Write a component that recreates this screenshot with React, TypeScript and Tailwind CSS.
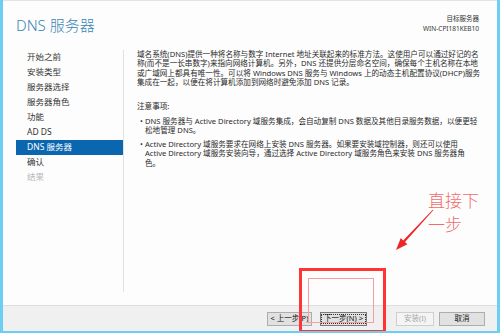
const navItems = [
  { label: "开始之前" },
  { label: "安装类型" },
  { label: "服务器选择" },
  { label: "服务器角色" },
  { label: "功能" },
  { label: "AD DS" },
  { label: "DNS 服务器", active: true },
  { label: "确认" },
  { label: "结果", disabled: true },
]

function Btn({ label, w, focus, disabled }: { label: string; w: string; focus?: boolean; disabled?: boolean }) {
  return (
    <div
      className={`${w} h-[14px] flex items-center justify-center border text-[7.5px] leading-none ${
        disabled
          ? "border-[#cfcfcf] bg-[#f4f4f4] text-[#a8a8a8]"
          : focus
            ? "border-[#7a7a7a] bg-[#e1e1e1] text-[#111]"
            : "border-[#adadad] bg-[#e1e1e1] text-[#111]"
      }`}
    >
      {focus ? (
        <span className="border border-dotted border-[#333] px-[2px] h-[10px] flex items-center whitespace-nowrap">{label}</span>
      ) : (
        label
      )}
    </div>
  )
}

export default function App() {
  return (
    <div className="relative w-[500px] h-[333px] overflow-hidden border-l-[3px] border-r-[3px] border-b-[2px] border-[#6ccef0] font-['Noto_Sans','Noto_Sans_CJK_SC',sans-serif]">
      <div className="flex flex-col h-full bg-[#fdfdfd] border-t border-[#e3e3e3]">
        {/* Header */}
        <div className="h-[47px] flex justify-between pl-[13px] pr-[18px]">
          <div className="text-[15px] font-light text-[#3a86b4] leading-none pt-[17px]">DNS 服务器</div>
          <div className="pt-[13px] text-right text-[6.5px] leading-[10px] text-[#333]">
            <div>目标服务器</div>
            <div>WIN-CPI181KEB10</div>
          </div>
        </div>

        {/* Body */}
        <div className="flex-1 flex">
          <div className="w-[120px] pl-[13px] pt-[2px]">
            {navItems.map((it) => (
              <div
                key={it.label}
                className={`h-[15px] pl-[11px] flex items-center text-[8.5px] leading-none ${
                  it.active ? "bg-[#0b66b0] text-white" : it.disabled ? "text-[#b9b9b9]" : "text-[#333]"
                }`}
              >
                {it.label}
              </div>
            ))}
          </div>
          <div className="w-px bg-[#e2e2e2] mt-[2px] mb-[13px]" />
          <div className="flex-1 pl-[13px] pt-[2px] text-[7.6px] leading-[9.4px] text-[#2a2a2a] whitespace-nowrap">
            <div>域名系统(DNS)提供一种将名称与数字 Internet 地址关联起来的标准方法。这使用户可以通过好记的名</div>
            <div>称(而不是一长串数字)来指向网络计算机。另外，DNS 还提供分层命名空间，确保每个主机名称在本地</div>
            <div>或广域网上都具有唯一性。可以将 Windows DNS 服务与 Windows 上的动态主机配置协议(DHCP)服务</div>
            <div>集成在一起，以便在将计算机添加到网络时避免添加 DNS 记录。</div>

            <div className="mt-[14px]">注意事项:</div>

            <div className="flex mt-[6px] pl-[3px]">
              <span className="w-[5px]">•</span>
              <div>
                <div>DNS 服务器与 Active Directory 域服务集成，会自动复制 DNS 数据及其他目录服务数据，以便更轻</div>
                <div>松地管理 DNS。</div>
              </div>
            </div>
            <div className="flex mt-[4px] pl-[3px]">
              <span className="w-[5px]">•</span>
              <div>
                <div>Active Directory 域服务要求在网络上安装 DNS 服务器。如果要安装域控制器，则还可以使用</div>
                <div>Active Directory 域服务安装向导，通过选择 Active Directory 域服务角色来安装 DNS 服务器角</div>
                <div>色。</div>
              </div>
            </div>
          </div>
        </div>

        {/* Footer */}
        <div className="h-[26px] border-t border-[#dedede] bg-[#f0f0f0] flex justify-end items-start pt-[6px] pr-[12px]">
          <Btn label="< 上一步(P)" w="w-[45px]" />
          <div className="w-[8px]" />
          <Btn label="下一步(N) >" w="w-[47px]" focus />
          <div className="w-[29px]" />
          <Btn label="安装(I)" w="w-[38px]" disabled />
          <div className="w-[5px]" />
          <Btn label="取消" w="w-[46px]" />
        </div>
      </div>

      {/* Annotation overlay */}
      <svg className="absolute left-[-3px] top-0 pointer-events-none" width="500" height="333" viewBox="0 0 500 333">
        <rect x="300.5" y="269.5" width="84" height="62" fill="none" stroke="#ff3434" strokeWidth="3" />
        <rect x="308.5" y="278.5" width="65" height="44" fill="none" stroke="#f5a0a0" strokeWidth="1" />
        <polygon
          points="433.3,210.3 405,242 407.4,244.3 396,250 400.8,238.1 403.2,240.4 432.7,209.7"
          fill="#ee2626"
        />
      </svg>
      <div className="absolute left-[425px] top-[188px] text-[17px] leading-[24px] text-[#f26b6b] font-['Noto_Sans_CJK_SC',sans-serif] font-light">
        <div className="h-[24px]">直接下</div>
        <div className="h-[24px]">一步</div>
      </div>
    </div>
  )
}
